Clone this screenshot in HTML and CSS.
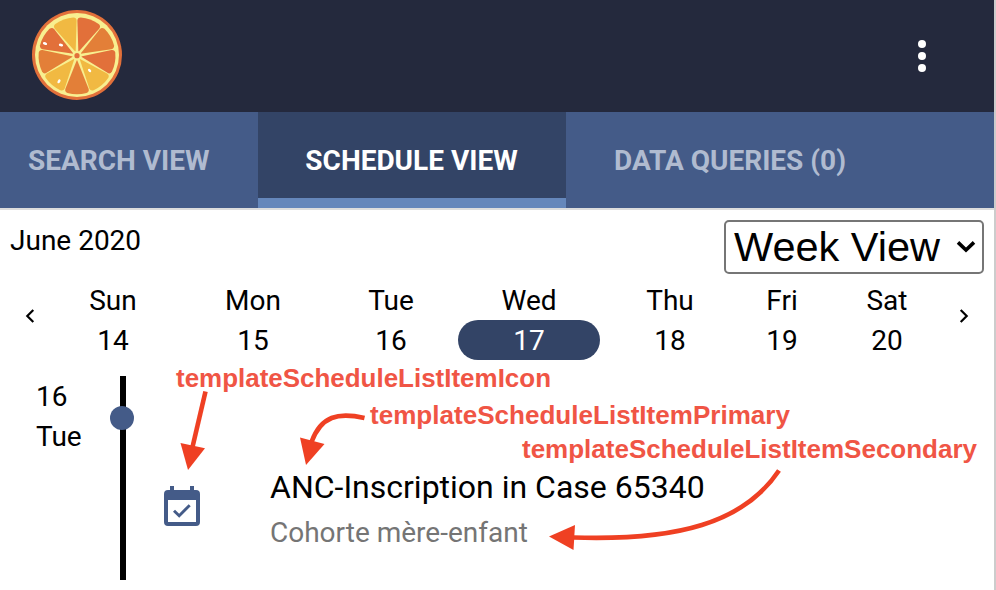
FILE: index.html
```html
<!DOCTYPE html>
<html lang="en">
<head>
<meta charset="utf-8">
<title>Schedule View</title>
<link rel="stylesheet" href="styles.css">
</head>
<body>
<div class="app">
  <header class="topbar">
    <svg class="logo" width="92" height="92" viewBox="-46 -46 92 92" aria-hidden="true">
      <defs><path id="wedge" d="M0-4L-11.6-33Q-12.6-36-9.5-37.2Q0-39.8 9.5-37.2Q12.6-36 11.6-33Z"/></defs>
      <circle r="45" fill="#e2703a"/>
      <circle r="42" fill="#f8ef90"/>
      <g transform="translate(0 .7)">
        <use href="#wedge" fill="#e2703a" transform="rotate(20)"/>
        <use href="#wedge" fill="#e37f38" transform="rotate(60)"/>
        <use href="#wedge" fill="#e2703a" transform="rotate(100)"/>
        <use href="#wedge" fill="#f1b942" transform="rotate(140)"/>
        <use href="#wedge" fill="#e37f38" transform="rotate(180)"/>
        <use href="#wedge" fill="#f1b942" transform="rotate(220)"/>
        <use href="#wedge" fill="#e37f38" transform="rotate(260)"/>
        <use href="#wedge" fill="#e2703a" transform="rotate(300)"/>
        <use href="#wedge" fill="#f1b942" transform="rotate(340)"/>
        <circle r="4.6" fill="#f8ef90"/>
        <circle r="2.6" fill="#e2703a"/>
      </g>
      <g fill="#fff">
        <ellipse cx="-32" cy="-11.5" rx="2.2" ry="1.4" transform="rotate(20 -32 -11.5)"/>
        <ellipse cx="-16" cy="-10" rx="2.2" ry="1.4" transform="rotate(15 -16 -10)"/>
        <ellipse cx="12.6" cy="15.5" rx="2" ry="1.3" transform="rotate(50 12.6 15.5)"/>
        <ellipse cx="-18" cy="26.3" rx="2.2" ry="1.3" transform="rotate(-60 -18 26.3)"/>
      </g>
    </svg>
    <svg class="menu" width="8" height="32" viewBox="0 0 8 32" fill="#fff" aria-hidden="true"><circle cx="4" cy="4" r="4"/><circle cx="4" cy="16" r="4"/><circle cx="4" cy="28" r="4"/></svg>
  </header>
  <nav class="tabs">
    <a class="tab tab-search">SEARCH VIEW</a>
    <a class="tab tab-schedule active">SCHEDULE VIEW</a>
    <a class="tab tab-queries">DATA QUERIES (0)</a>
  </nav>
  <div class="toolbar">
    <span class="month">June 2020</span>
    <div class="view-select"><span>Week View</span>
      <svg width="20" height="14" viewBox="0 0 20 14" fill="none" stroke="#000" stroke-width="3.6" aria-hidden="true"><path d="M2 2.4L10 10L18 2.4"/></svg>
    </div>
  </div>
  <div class="week">
    <svg class="arrow" width="10" height="14" viewBox="0 0 10 14" fill="none" stroke="#000" stroke-width="2.2" aria-hidden="true"><path d="M8.3 1L2.3 7L8.3 13"/></svg>
    <div class="day"><span>Sun</span><span>14</span></div>
    <div class="day"><span>Mon</span><span>15</span></div>
    <div class="day"><span>Tue</span><span>16</span></div>
    <div class="day today"><span>Wed</span><span>17</span></div>
    <div class="day"><span>Thu</span><span>18</span></div>
    <div class="day"><span>Fri</span><span>19</span></div>
    <div class="day"><span>Sat</span><span>20</span></div>
    <svg class="arrow" width="10" height="14" viewBox="0 0 10 14" fill="none" stroke="#000" stroke-width="2.2" aria-hidden="true"><path d="M1.7 1L7.7 7L1.7 13"/></svg>
  </div>
  <main class="agenda">
    <div class="date"><span>16</span><span>Tue</span></div>
    <div class="line"><i class="dot"></i></div>
    <svg class="event-icon" width="36" height="40" viewBox="0 0 36 40" aria-hidden="true">
      <path fill="#445b88" fill-rule="evenodd" d="M6 0h4v4h16V0h4v4h2a4 4 0 0 1 4 4v28a4 4 0 0 1-4 4H4a4 4 0 0 1-4-4V8a4 4 0 0 1 4-4h2zM4 14v22h28V14z"/>
      <path fill="none" stroke="#445b88" stroke-width="2.9" d="M10 24.7L15.2 29.7L25.7 19.2"/>
    </svg>
    <div class="event">
      <div class="primary">ANC-Inscription in Case 65340</div>
      <div class="secondary">Cohorte mère-enfant</div>
    </div>
  </main>
  <svg class="notes" width="994" height="590" viewBox="0 0 994 590">
    <g class="note-text">
      <text x="176" y="387" textLength="375" lengthAdjust="spacingAndGlyphs">templateScheduleListItemIcon</text>
      <text x="370" y="424" textLength="420" lengthAdjust="spacingAndGlyphs">templateScheduleListItemPrimary</text>
      <text x="522" y="458" textLength="455" lengthAdjust="spacingAndGlyphs">templateScheduleListItemSecondary</text>
    </g>
    <g fill="none" stroke="#ef4023" stroke-width="4.6">
      <path d="M205.5 391.5L192.5 447"/>
      <path d="M364.5 418C338 412 321 416 311.5 442"/>
      <path d="M779 470.5C744 523 677 541 573 537.5"/>
    </g>
    <g fill="#ef4023">
      <path d="M180.5 443L205 448.3L188 470Z"/>
      <path d="M300 437.5L324.5 444L306 465Z"/>
      <path d="M549 536.5L575 525L573.5 550Z"/>
    </g>
  </svg>
</div>
</body>
</html>
```
FILE: styles.css
```css
* { box-sizing: border-box; }
body { margin: 0; background: #fff; overflow: hidden; }
.app {
  position: relative;
  width: 996px;
  height: 590px;
  border-right: 2px solid #ccc;
  font-family: Roboto, sans-serif;
  font-size: 28px;
  line-height: 40px;
  color: #000;
}
.topbar {
  height: 112px;
  background: #24293d;
  display: flex;
  align-items: center;
  justify-content: space-between;
  padding: 0 68px 2px 31px;
}
.menu { margin-top: 2px; }
.tabs {
  display: flex;
  height: 98px;
  background: #445b88;
  border-bottom: 2px solid #ddd;
  font-weight: 700;
  white-space: nowrap;
}
.tab { display: flex; align-items: center; color: #b0bbd0; padding-top: 2px; }
.tab-search { width: 258px; padding-left: 28px; }
.tab-schedule { width: 308px; justify-content: center; }
.tab-queries { padding-left: 48px; }
.tab.active {
  background: #334466;
  color: #fff;
  border-bottom: 10px solid #6587bb;
  padding: 12px 1px 0 0;
}
.toolbar {
  height: 70px;
  display: flex;
  justify-content: space-between;
  padding: 10px 10px 0 10px;
}
.month, .day span, .date span { height: 40px; padding-top: 2px; line-height: 38px; }
.view-select {
  width: 260px;
  height: 54px;
  border: 2px solid #767676;
  border-radius: 5px;
  display: flex;
  align-items: center;
  justify-content: space-between;
  padding: 0 6px 0 8px;
  font: 41.5px/50px "Liberation Sans", sans-serif;
  white-space: nowrap;
}
.week {
  display: grid;
  grid-template-columns: 44px 138px 142px 134px 142px 140px 84px 126px 28px;
  height: 80px;
  text-align: center;
}
.arrow { justify-self: center; margin-top: 29px; }
.arrow:first-child { margin-left: 15px; }
.day { display: flex; flex-direction: column; }
.today span:last-child { background: #334466; color: #fff; border-radius: 20px; }
.agenda { display: flex; padding-top: 16px; }
.date { width: 120px; padding-left: 36px; display: flex; flex-direction: column; }
.line { width: 6px; height: 204px; background: #000; }
.dot {
  display: block;
  width: 24px;
  height: 24px;
  margin: 30px 0 0 -10px;
  border-radius: 50%;
  background: #445b88;
}
.event-icon { margin: 110px 0 0 38px; }
.event { margin: 88px 0 0 70px; white-space: nowrap; }
.primary { font-size: 32px; line-height: 46px; }
.secondary { color: #757575; line-height: 46px; }
.notes { position: absolute; left: 0; top: 0; }
.note-text {
  font: 700 26px "Liberation Sans", sans-serif;
  fill: #f05545;
}
```
